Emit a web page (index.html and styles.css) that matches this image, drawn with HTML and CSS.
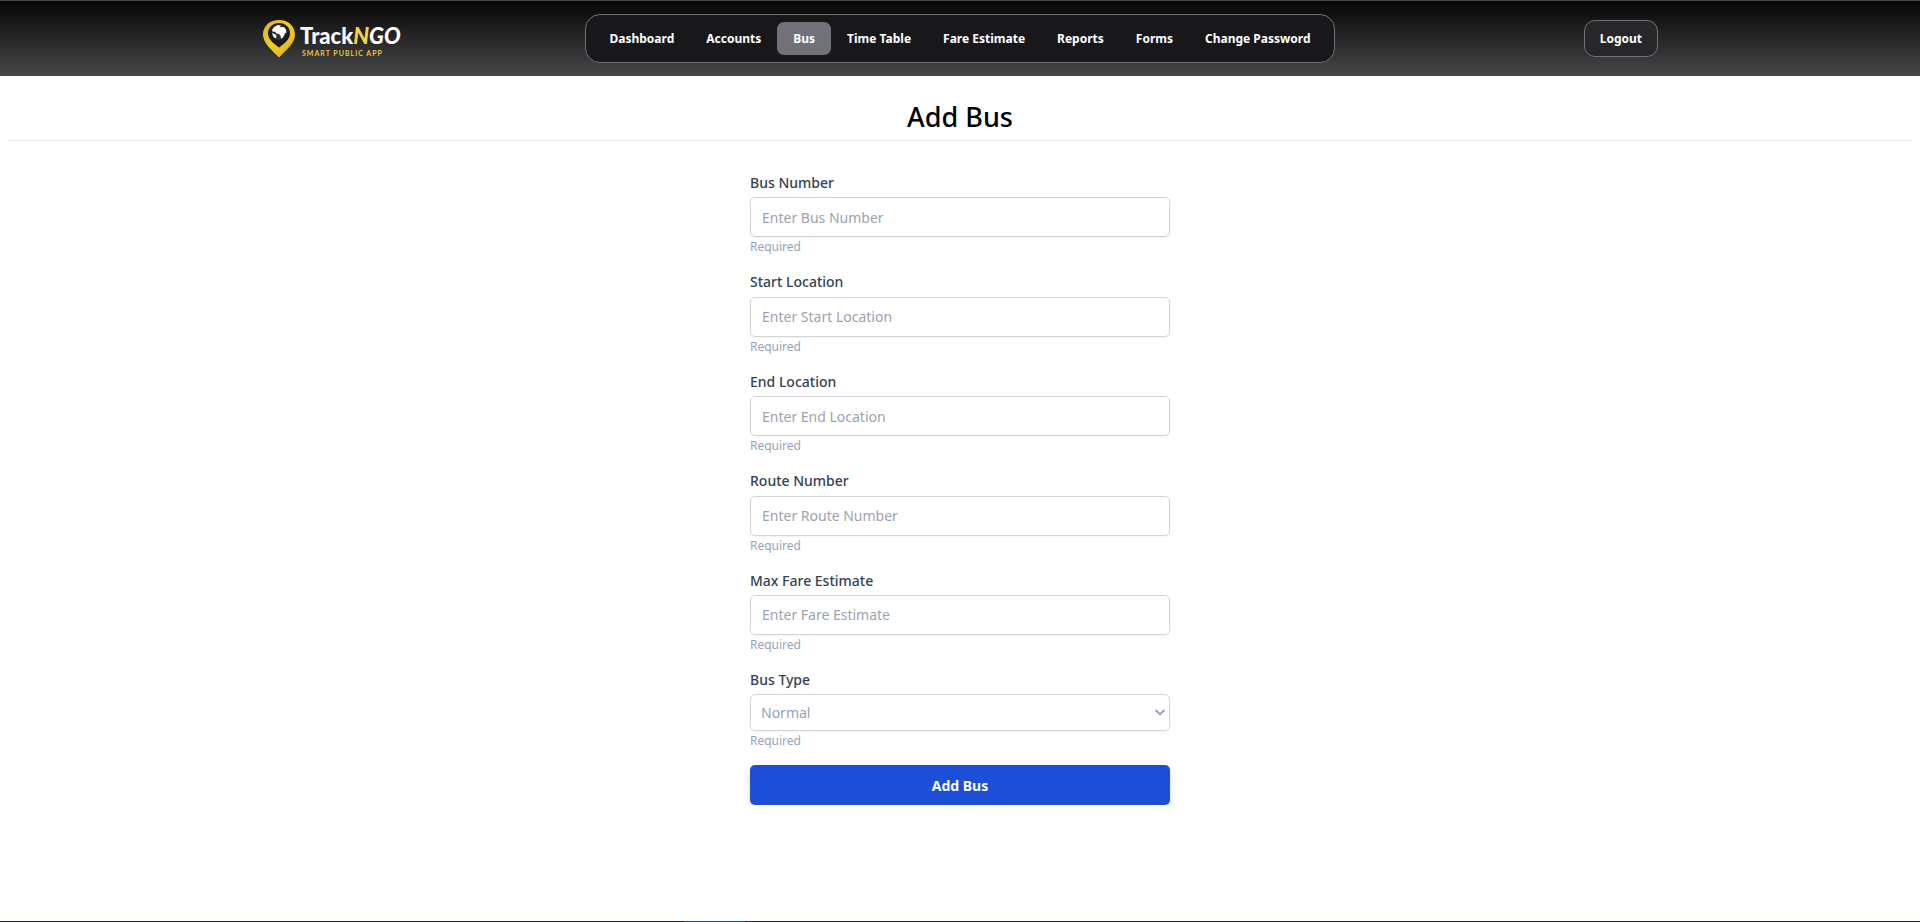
FILE: index.html
```html
<!DOCTYPE html>
<html lang="en">
<head>
<meta charset="utf-8">
<meta name="viewport" content="width=device-width, initial-scale=1">
<title>TrackNGO - Add Bus</title>
<link rel="stylesheet" href="styles.css">
</head>
<body>
<header class="header">
  <a class="logo" href="#" aria-label="TrackNGO home">
    <svg class="logo-pin" viewBox="0 0 32 38" aria-hidden="true">
      <defs>
        <linearGradient id="gold" x1="0" y1="0" x2="1" y2="1">
          <stop offset="0" stop-color="#dfb313"/>
          <stop offset="0.45" stop-color="#f0cd2a"/>
          <stop offset="1" stop-color="#dfae0a"/>
        </linearGradient>
      </defs>
      <path fill="url(#gold)" d="M16 0C7 0 0 6 0 14.500C0 23.500 9 30 16 37.500C23 30 32 23.500 32 14.500C32 6 25 0 16 0Z"/>
      <path fill="#1a1a1b" d="M16 3C9.500 3 5 7.500 5 13.500C5 18.500 9.500 23 16 27.500C22.500 23 27 18.500 27 13.500C27 7.500 22.500 3 16 3Z"/>
      <circle cx="16" cy="12.500" r="7.500" fill="#303030"/>
      <path fill="#fff" d="M9 10L11 7L15 5L18 5.500L16.500 7.500L18.500 7L21 7L23 9.500L23.500 12.500L22 13L21 15.500L19.500 18L18 18.500L17.500 15.500L16 14L13.500 13.500L12 11.500L10 12ZM9 13L11.500 14L13.500 15.500L13 18.500L10.500 17Z"/>
    </svg>
    <span class="logo-text">
      <span class="logo-name">Track<em class="logo-n">N</em><em>GO</em></span>
      <span class="logo-tag">SMART PUBLIC APP</span>
    </span>
  </a>
  <nav class="nav" aria-label="Main">
    <a class="nav-link" href="#">Dashboard</a>
    <a class="nav-link" href="#">Accounts</a>
    <a class="nav-link nav-link-active" href="#" aria-current="page">Bus</a>
    <a class="nav-link" href="#">Time Table</a>
    <a class="nav-link" href="#">Fare Estimate</a>
    <a class="nav-link" href="#">Reports</a>
    <a class="nav-link" href="#">Forms</a>
    <a class="nav-link" href="#">Change Password</a>
  </nav>
  <div class="account">
    <button class="logout" type="button">Logout</button>
  </div>
</header>
<main class="main">
  <h1 class="title">Add Bus</h1>
  <form class="form">
    <div class="field">
      <label class="label" for="bus-number">Bus Number</label>
      <input class="input" id="bus-number" type="text" placeholder="Enter Bus Number">
      <p class="hint">Required</p>
    </div>
    <div class="field">
      <label class="label" for="start">Start Location</label>
      <input class="input" id="start" type="text" placeholder="Enter Start Location">
      <p class="hint">Required</p>
    </div>
    <div class="field">
      <label class="label" for="end">End Location</label>
      <input class="input" id="end" type="text" placeholder="Enter End Location">
      <p class="hint">Required</p>
    </div>
    <div class="field">
      <label class="label" for="route">Route Number</label>
      <input class="input" id="route" type="text" placeholder="Enter Route Number">
      <p class="hint">Required</p>
    </div>
    <div class="field">
      <label class="label" for="fare">Max Fare Estimate</label>
      <input class="input" id="fare" type="text" placeholder="Enter Fare Estimate">
      <p class="hint">Required</p>
    </div>
    <div class="field">
      <label class="label" for="type">Bus Type</label>
      <div class="select-wrap">
        <select class="select" id="type">
          <option>Normal</option>
          <option>Luxury</option>
        </select>
        <svg class="chevron" viewBox="0 0 12 7" aria-hidden="true"><path d="M1.500 1L6 5.200L10.500 1" fill="none" stroke="#94a3b8" stroke-width="2"/></svg>
      </div>
      <p class="hint">Required</p>
    </div>
    <button class="submit" type="submit">Add Bus</button>
  </form>
</main>
<div class="bottom-edge"></div>
</body>
</html>
```
FILE: styles.css
```css
* {
  box-sizing: border-box;
}

body {
  margin: 0;
  background: #fff;
  color: #000;
  font-family: "Noto Sans", "Open Sans", sans-serif;
  font-size: 14px;
}

.header {
  display: grid;
  grid-template-columns: 1fr auto 1fr;
  align-items: center;
  height: 76px;
  padding: 0 262px;
  border-top: 1px solid #48484a;
  background: linear-gradient(#060607, #48484a);
}

.logo {
  display: flex;
  align-items: center;
  gap: 5px;
  padding-left: 1px;
  color: #fff;
  text-decoration: none;
}

.logo-pin {
  width: 32px;
  height: 38px;
}

.logo-text {
  display: flex;
  flex-direction: column;
  padding-top: 4px;
}

.logo-name {
  font: 900 22px/24px Lato, sans-serif;
}

.logo-n {
  color: #f5d444;
}

.logo-tag {
  padding-left: 2px;
  color: #e6c840;
  font: 700 7px/10px Lato, sans-serif;
  letter-spacing: 1px;
}

.nav {
  display: flex;
  padding: 7px;
  border: 1px solid #71717a;
  border-radius: 15px;
  background: #18181b;
}

.nav-link {
  padding: 7px 16px;
  border-radius: 7px;
  color: #fff;
  font-size: 12px;
  font-weight: 700;
  line-height: 19px;
  text-decoration: none;
}

.nav-link-active {
  background: #71717a;
}

.account {
  display: flex;
  justify-content: flex-end;
}

.logout {
  padding: 8px 15px;
  border: 1px solid #71717a;
  border-radius: 11px;
  background: #27272a;
  color: #fff;
  font: inherit;
  font-size: 12px;
  font-weight: 700;
  line-height: 19px;
}

.main {
  padding: 22px 8px 0;
}

.title {
  margin: 0;
  padding-bottom: 4px;
  border-bottom: 1px solid #e2e8f0;
  font-size: 27px;
  font-weight: 500;
  line-height: 38px;
  text-align: center;
}

.form {
  width: 100%;
  max-width: 420px;
  margin: 31px auto 0;
}

.field {
  display: flex;
  flex-direction: column;
  margin-bottom: 14px;
}

.label {
  margin-bottom: 3px;
  color: #334155;
  font-size: 14px;
  font-weight: 500;
  line-height: 1.6;
}

.input,
.select {
  width: 100%;
  border: 1px solid #d1d5db;
  border-radius: 5px;
  background: #fff;
  box-shadow: 0 1px 2px rgba(0, 0, 0, 0.05);
  font: inherit;
}

.input {
  height: 40px;
  padding: 0 11px;
}

.input::placeholder {
  color: #9ca3af;
  opacity: 1;
}

.select-wrap {
  position: relative;
}

.select {
  display: block;
  height: 37px;
  padding: 0 10px;
  color: #94a3b8;
  appearance: none;
}

.chevron {
  position: absolute;
  top: 15px;
  right: 4px;
  width: 12px;
  height: 7px;
  pointer-events: none;
}

.hint {
  margin: 0;
  color: #94a3b8;
  font-size: 12px;
  line-height: 20px;
}

.submit {
  display: block;
  width: 100%;
  height: 40px;
  border: 0;
  border-radius: 5px;
  background: #1d4ed8;
  box-shadow: 0 3px 6px rgba(0, 0, 0, 0.15);
  color: #fff;
  font: inherit;
  font-weight: 700;
}

.bottom-edge {
  position: fixed;
  right: 0;
  bottom: 0;
  left: 0;
  height: 1px;
  background: linear-gradient(90deg, #14293c 684px, #175082 684px, #175082 745px, #14293c 745px);
}
```
